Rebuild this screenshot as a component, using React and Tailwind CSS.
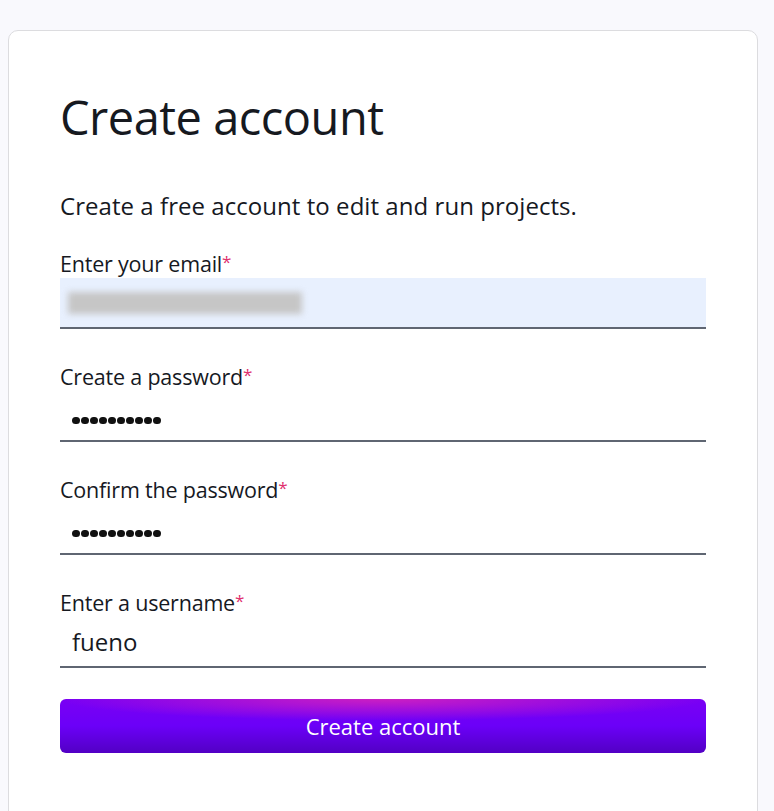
import { useState } from "react";

function Label({ children }) {
  return (
    <label className="block h-[28px] text-[21.5px] leading-[28px] text-[#16191f] tracking-[-0.2px]">
      {children}
      <span className="text-[#e0306e] text-[17px] align-top leading-[24px]">*</span>
    </label>
  );
}

function Field({ label, children, autofill }) {
  return (
    <div>
      <Label>{label}</Label>
      <div
        className={
          "h-[51px] border-b-2 border-[#5f6672] flex items-center px-[12px] " +
          (autofill ? "bg-[#e8f0fe]" : "bg-white")
        }
      >
        {children}
      </div>
    </div>
  );
}

function Dots() {
  return (
    <div className="flex gap-[1.5px] translate-y-[5px]">
      {Array.from({ length: 10 }).map((_, i) => (
        <span key={i} className="w-[7.5px] h-[7.5px] rounded-full bg-[#111]" />
      ))}
    </div>
  );
}

export default function App() {
  const [username, setUsername] = useState("fueno");

  return (
    <div
      className="min-h-[811px] bg-[#f9f9fd] pt-[30px] pl-[8px] pr-[16px] overflow-hidden"
      style={{ fontFamily: '"Open Sans", "Noto Sans", sans-serif' }}
    >
      <div className="bg-white border border-[#dcdcdf] rounded-[10px] h-[820px] px-[51px] pt-[54px]">
        <h1 className="text-[47px] leading-[64px] text-[#16191f] tracking-[-0.5px]">Create account</h1>
        <p className="mt-[41px] text-[24px] leading-[32px] text-[#16191f] tracking-[0.05px]">
          Create a free account to edit and run projects.
        </p>

        <div className="mt-[28px] flex flex-col gap-[34px]">
          <Field label="Enter your email" autofill>
            <div className="w-[234px] h-[22px] bg-[#c6c6c6] blur-[3px] -ml-[4px]" />
          </Field>
          <Field label="Create a password">
            <Dots />
          </Field>
          <Field label="Confirm the password">
            <Dots />
          </Field>
          <Field label="Enter a username">
            <input
              value={username}
              onChange={(e) => setUsername(e.target.value)}
              className="w-full bg-transparent outline-none text-[24px] text-[#16191f]"
            />
          </Field>
        </div>

        <button className="mt-[31px] w-full h-[54px] rounded-[6px] text-white text-[22px] font-medium bg-[radial-gradient(ellipse_50%_40%_at_50%_0%,#cc1fc2_0%,transparent_100%),linear-gradient(to_bottom,#7a00f4_0%,#6b00f8_50%,#5200c4_100%)]">
          Create account
        </button>
      </div>
    </div>
  );
}
